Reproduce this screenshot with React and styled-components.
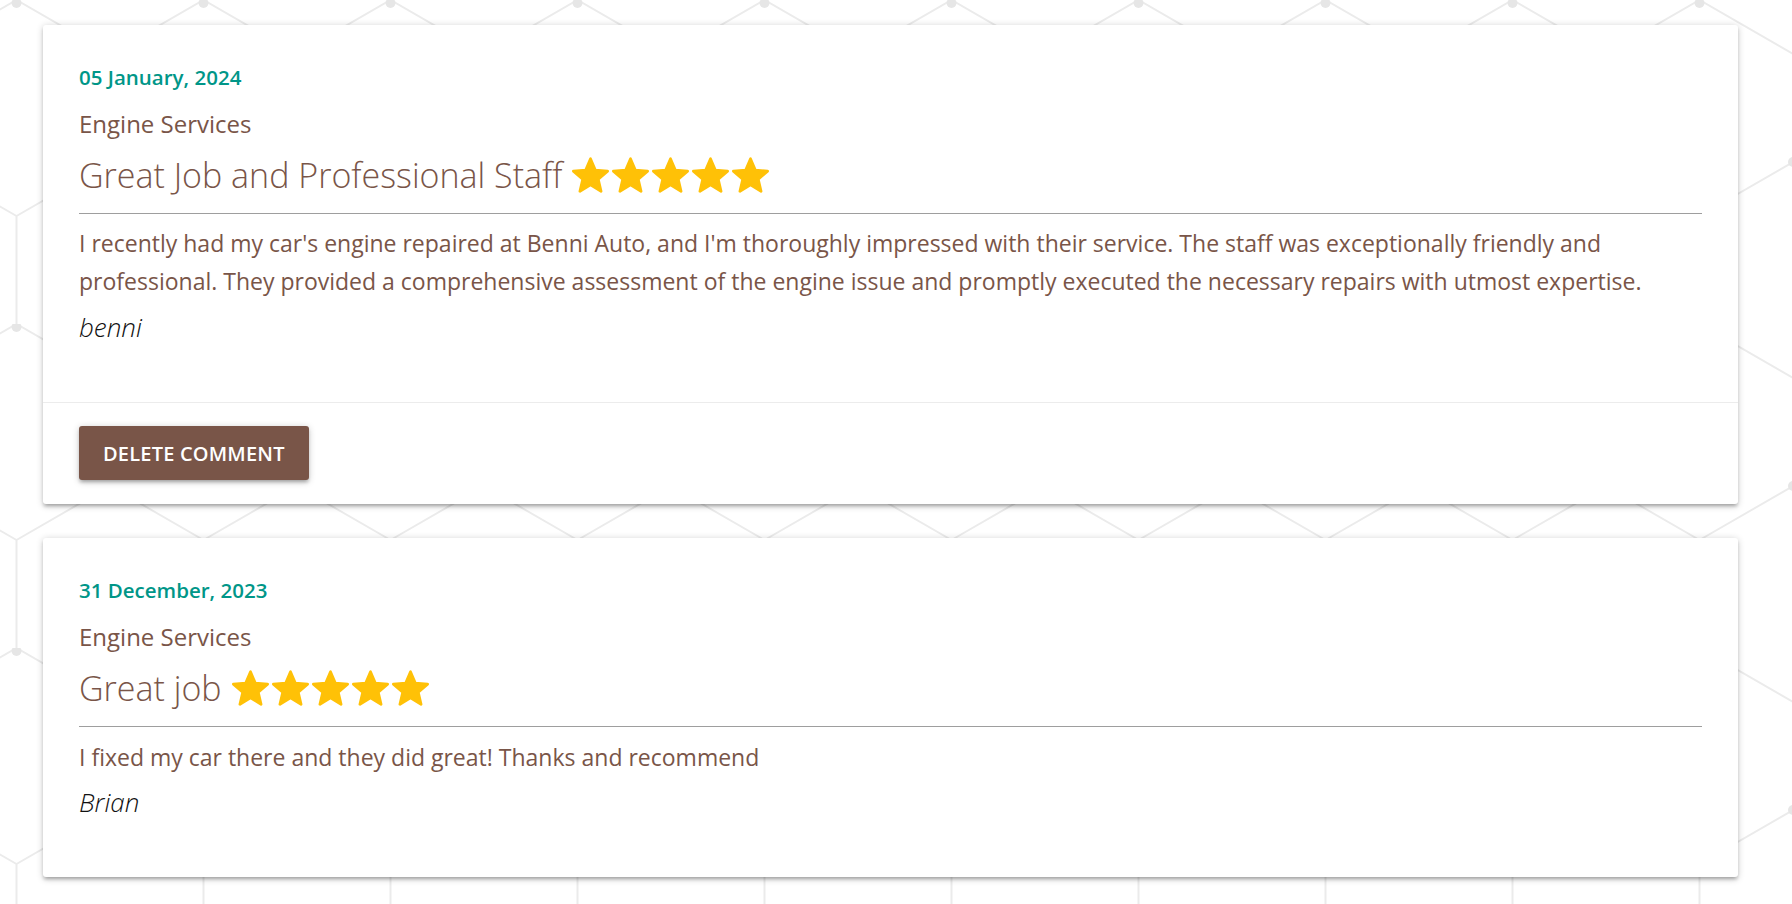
import React from "react";
import styled, { createGlobalStyle } from "styled-components";

const S = 108;
const W = 187;
const tileSvg = `<svg xmlns='http://www.w3.org/2000/svg' width='${W}' height='${3 * S}' viewBox='0 0 ${W} ${3 * S}'><g stroke='#ebebeb' stroke-width='2' fill='none'><path d='M${W / 2} 0 L${W} ${S / 2} M${W / 2} 0 L0 ${S / 2} M0 ${S / 2} L0 ${1.5 * S} M${W} ${S / 2} L${W} ${1.5 * S} M0 ${1.5 * S} L${W / 2} ${2 * S} M${W} ${1.5 * S} L${W / 2} ${2 * S} M${W / 2} ${2 * S} L${W / 2} ${3 * S}'/></g><g fill='#e6e6e6'><circle cx='${W / 2}' cy='3' r='5'/><circle cx='0' cy='${1.5 * S}' r='5'/><circle cx='${W}' cy='${1.5 * S}' r='5'/></g></svg>`;
const tileUrl = `url("data:image/svg+xml,${encodeURIComponent(tileSvg)}")`;

const GlobalStyle = createGlobalStyle`
  html, body {
    margin: 0;
    padding: 0;
  }
  body {
    background-color: #ffffff;
    background-image: ${tileUrl};
    background-size: ${W}px ${3 * S}px;
    background-position: 109.5px 0px;
    font-family: "Open Sans", "Noto Sans", sans-serif;
    color: #795548;
  }
`;

const Page = styled.main`
  padding: 25px 54px 27px 43px;
  display: flex;
  flex-direction: column;
  gap: 34px;
`;

const Card = styled.article`
  background: #ffffff;
  border-radius: 3px;
  box-shadow: 0 3px 3px 0 rgba(0, 0, 0, 0.14), 0 4px 2px -3px rgba(0, 0, 0, 0.12),
    0 1.5px 7.5px 0 rgba(0, 0, 0, 0.2);
  display: flex;
  flex-direction: column;
`;

const CardContent = styled.div`
  padding: 36px;
  display: flex;
  flex-direction: column;
`;

const DateText = styled.div`
  font-size: 20.5px;
  font-weight: 600;
  line-height: 32px;
  color: #009688;
`;

const Service = styled.div`
  margin-top: 14px;
  font-size: 24px;
  line-height: 34px;
  color: #795548;
`;

const TitleRow = styled.h2`
  margin: 11.5px 0 0;
  display: flex;
  align-items: center;
  gap: 10px;
  font-size: 34px;
  font-weight: 300;
  line-height: 44px;
  color: #795548;
`;

const Stars = styled.span`
  display: inline-flex;
  gap: 3px;
`;

const StarSvg = styled.svg`
  width: 37px;
  height: 36px;
  display: block;
  fill: #ffc107;
  stroke: #ffc107;
  stroke-width: 1.6;
  stroke-linejoin: round;
`;

const Divider = styled.hr`
  margin: 16.5px 0 0;
  border: 0;
  border-top: 1px solid #9e9e9e;
  height: 0;
`;

const Body = styled.p`
  margin: 10.4px 0 0;
  font-size: 23px;
  line-height: 38px;
  color: #795548;
`;

const Author = styled.p`
  margin: 7.8px 0 20px;
  font-size: 26px;
  font-style: italic;
  font-weight: 300;
  line-height: 38px;
  color: #111111;
`;

const CardAction = styled.div`
  border-top: 1px solid rgba(160, 160, 160, 0.2);
  padding: 23px 36px 24px;
  display: flex;
`;

const Button = styled.button`
  height: 54px;
  padding: 0 24px;
  border: 0;
  border-radius: 3px;
  background: #795548;
  color: #ffffff;
  font-family: "Open Sans", "Noto Sans", sans-serif;
  font-size: 20px;
  font-weight: 600;
  letter-spacing: 0.2px;
  text-transform: uppercase;
  box-shadow: 0 3px 3px 0 rgba(0, 0, 0, 0.14), 0 4px 2px -3px rgba(0, 0, 0, 0.12),
    0 1.5px 7.5px 0 rgba(0, 0, 0, 0.2);
  cursor: pointer;
`;

function Star() {
  return (
    <StarSvg viewBox="1.2 1.2 21.6 20.6" aria-hidden="true">
      <path d="M12 17.27L18.18 21l-1.64-7.03L22 9.24l-7.19-.61L12 2 9.19 8.63 2 9.24l5.46 4.73L5.82 21z" />
    </StarSvg>
  );
}

const reviews = [
  {
    date: "05 January, 2024",
    service: "Engine Services",
    title: "Great Job and Professional Staff",
    rating: 5,
    body:
      "I recently had my car's engine repaired at Benni Auto, and I'm thoroughly impressed with their service. The staff was exceptionally friendly and professional. They provided a comprehensive assessment of the engine issue and promptly executed the necessary repairs with utmost expertise.",
    author: "benni",
    deletable: true,
  },
  {
    date: "31 December, 2023",
    service: "Engine Services",
    title: "Great job",
    rating: 5,
    body: "I fixed my car there and they did great! Thanks and recommend",
    author: "Brian",
    deletable: false,
  },
];

export default function App() {
  return (
    <>
      <GlobalStyle />
      <Page>
        {reviews.map((r) => (
          <Card key={r.date}>
            <CardContent>
              <DateText>{r.date}</DateText>
              <Service>{r.service}</Service>
              <TitleRow>
                <span>{r.title}</span>
                <Stars>
                  {Array.from({ length: r.rating }).map((_, i) => (
                    <Star key={i} />
                  ))}
                </Stars>
              </TitleRow>
              <Divider />
              <Body>{r.body}</Body>
              <Author>{r.author}</Author>
            </CardContent>
            {r.deletable && (
              <CardAction>
                <Button type="button">Delete Comment</Button>
              </CardAction>
            )}
          </Card>
        ))}
      </Page>
    </>
  );
}
